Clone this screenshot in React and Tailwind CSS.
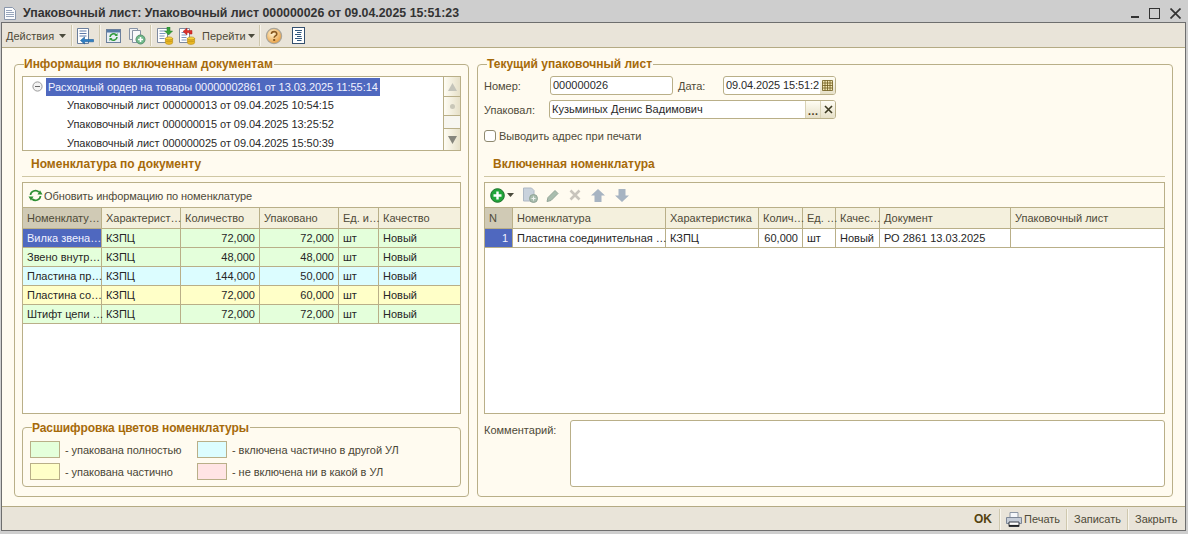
import React from "react";

const Sep = () => <div className="w-[2px] h-[21px] border-l border-[#cfc8ae] bg-[#f8f5ec]" />;

const DocBase = ({ children }) => (
  <svg width="18" height="18" viewBox="0 0 18 18" className="shrink-0 block">{children}</svg>
);

const IconBack = () => (
  <DocBase>
    <path d="M1.5 1.5h11v15h-11z" fill="#fff" stroke="#6b7f9c" />
    <path d="M3.5 4h7M3.5 6.5h7M3.5 9h7" stroke="#5e7aa8" />
    <path d="M17.5 12.5H8.5V10L4.5 13.5l4 3.5v-2.2h9z" fill="#2f7fc4" stroke="#1d5c98" strokeWidth=".6" />
  </DocBase>
);
const IconRefreshWin = () => (
  <DocBase>
    <rect x="1.5" y="2.5" width="14" height="13" fill="#e8eef4" stroke="#6b7f9c" />
    <rect x="2" y="3" width="13" height="2.5" fill="#557aa5" />
    <path d="M5 10a3.5 3.5 0 0 1 6-2.2M12 10a3.5 3.5 0 0 1-6 2.2" fill="none" stroke="#2f9a3a" strokeWidth="1.6" />
    <path d="M12.5 6v3h-3zM4.5 14v-3h3z" fill="#2f9a3a" />
  </DocBase>
);
const IconCopyAdd = () => (
  <DocBase>
    <path d="M1.5 1.5h8v11h-8z" fill="#f0f2f5" stroke="#8793a5" />
    <path d="M4.5 3.5h8v12h-8z" fill="#f8f9fb" stroke="#8793a5" />
    <circle cx="12.5" cy="12.5" r="4.5" fill="#6fb98a" stroke="#5a8f6e" />
    <path d="M10 12.5h5M12.5 10v5" stroke="#fff" strokeWidth="1.6" />
  </DocBase>
);
const Coins = () => (
  <g>
    <ellipse cx="13" cy="11.5" rx="3.6" ry="1.6" fill="#f6d33c" stroke="#b58a12" strokeWidth=".6" />
    <path d="M9.4 11.5v4.2c0 .9 1.6 1.7 3.6 1.7s3.6-.8 3.6-1.7v-4.2c0 .9-1.6 1.6-3.6 1.6s-3.6-.7-3.6-1.6z" fill="#ebb927" stroke="#b58a12" strokeWidth=".6" />
    <path d="M9.6 14c.6.9 5.6 1 6.8 0" stroke="#b58a12" strokeWidth=".6" fill="none" />
  </g>
);
const IconDocDown = () => (
  <DocBase>
    <path d="M1.5 1.5h10v14h-10z" fill="#fff" stroke="#7f8ba0" />
    <path d="M3.5 4h6M3.5 6.5h6M3.5 9h5M3.5 11.5h5" stroke="#7b95bd" />
    <path d="M11 0v4H8.6l4 4 4-4H14V0z" fill="#36a13b" stroke="#257a2b" strokeWidth=".5" />
    <Coins />
  </DocBase>
);
const IconDocBack = () => (
  <DocBase>
    <path d="M1.5 1.5h10v14h-10z" fill="#fff" stroke="#7f8ba0" />
    <path d="M3.5 5.5h4M3.5 8h5M3.5 10.5h5M3.5 13h5" stroke="#7b95bd" />
    <path d="M14 7V3.5H9V1L5 4.5 9 8V5.7h2.6V7z" fill="#dc2f2a" stroke="#a81e1a" strokeWidth=".5" />
    <Coins />
  </DocBase>
);
const IconHelp = () => (
  <svg width="18" height="18" viewBox="0 0 18 18" className="shrink-0 block">
    <defs>
      <radialGradient id="hg" cx=".4" cy=".35" r=".7">
        <stop offset="0" stopColor="#fff2cf" />
        <stop offset="1" stopColor="#e79a3a" />
      </radialGradient>
    </defs>
    <circle cx="9" cy="9" r="7.6" fill="url(#hg)" stroke="#a9a59a" strokeWidth="1.2" />
    <path d="M6.4 7c0-3.2 5.4-3.1 5.4-.1 0 2-2.6 2-2.6 3.8" fill="none" stroke="#8a5a22" strokeWidth="1.6" />
    <rect x="8.2" y="12" width="2" height="2" fill="#8a5a22" />
  </svg>
);
const IconList = () => (
  <svg width="13" height="17" viewBox="0 0 13 17" className="shrink-0 block">
    <rect x=".5" y=".5" width="12" height="16" fill="#fff" stroke="#34506f" />
    <path d="M3 3.5h7M5 5.5h4.5M3 7.5h6M5 9.5h4.5M3 11.5h7M5 13.5h4.5" stroke="#33597f" />
  </svg>
);
const Caret = () => (
  <svg width="7" height="4" viewBox="0 0 7 4" className="shrink-0 block"><path d="M0 0h7L3.5 4z" fill="#4a4a3c" /></svg>
);

const Legend = ({ children, className }) => (
  <div className={"w-fit bg-[#fffbf0] font-bold text-[12px] leading-[14px] text-[#a66a0a] pr-[1px] " + className}>{children}</div>
);

const Line = ({ title, className }) => (
  <div className={"shrink-0 h-[19px] font-bold text-[#a66a0a] text-[12px] leading-[14px] " + className}>{title}</div>
);

const leftHeaders = [
  ["Номенклату…", "bg-[#d0cab5]"],
  ["Характерист…", ""],
  ["Количество", ""],
  ["Упаковано", ""],
  ["Ед. и…", ""],
  ["Качество", "border-r-0"],
];

const rows = [
  ["Вилка звена…", "72,000", "72,000", "bg-[#e4ffdb]", true],
  ["Звено внутр…", "48,000", "48,000", "bg-[#e4ffdb]", false],
  ["Пластина пр…", "144,000", "50,000", "bg-[#dcfdff]", false],
  ["Пластина со…", "72,000", "60,000", "bg-[#ffffc8]", false],
  ["Штифт цепи …", "72,000", "72,000", "bg-[#e4ffdb]", false],
];

const cellBase = "border-r border-b border-[#b9af88] pl-[4px] pr-[4px] whitespace-nowrap leading-[18px]";

const GridRefresh = () => (
  <svg width="15" height="13" viewBox="0 0 15 13" className="shrink-0 block">
    <path d="M2.5 6a5 4.6 0 0 1 8.4-3" fill="none" stroke="#2f8f34" strokeWidth="1.7" />
    <path d="M12.5 7a5 4.6 0 0 1-8.4 3" fill="none" stroke="#2f8f34" strokeWidth="1.7" />
    <path d="M14.5 5.5h-5L12 1.2zM.5 7.5h5L3 11.8z" fill="#2f8f34" />
  </svg>
);

const AddIcon = () => (
  <svg width="15" height="15" viewBox="0 0 15 15" className="shrink-0 block">
    <circle cx="7.5" cy="7.5" r="6.8" fill="#22a63a" stroke="#1a6f2a" />
    <path d="M3.5 7.5h8M7.5 3.5v8" stroke="#fff" strokeWidth="2.4" />
  </svg>
);

const Printer = () => (
  <svg width="16" height="15" viewBox="0 0 16 15" className="shrink-0 block">
    <path d="M4 .5h8v5H4z" fill="#f5f7fa" stroke="#8d97a5" />
    <path d="M.5 5.5h15v6h-15z" fill="#c6cdd8" stroke="#7d8796" />
    <path d="M3 10h10v4.5H3z" fill="#fff" stroke="#3a3f48" />
    <path d="M3 13.6h10" stroke="#222" strokeWidth="1.4" />
  </svg>
);

export default function App() {
  return (
    <div className="w-[1188px] h-[534px] overflow-hidden bg-[#cecece] flex flex-col text-[11px] leading-[14px] text-[#3b3b2c] font-['Liberation_Sans',Arial,sans-serif]">
      {/* title bar */}
      <div className="h-[22px] shrink-0 flex items-center pt-[4px] pl-[4px] pr-[7px]">
        <svg width="12" height="13" viewBox="0 0 12 13" className="shrink-0 block">
          <path d="M.5.5h8l3 3v9H.5z" fill="#fbfcfe" stroke="#8a97ac" />
          <path d="M2 3.5h6M2 5.5h8M2 7.5h8M2 9.5h8" stroke="#98a6bc" />
        </svg>
        <div className="ml-[7px] font-bold text-[12.35px] text-[#333333] whitespace-nowrap">Упаковочный лист: Упаковочный лист 000000026 от 09.04.2025 15:51:23</div>
        <div className="ml-auto flex items-center">
          <div className="w-[8px] h-[2px] bg-[#333333] mt-[8px]" />
          <div className="ml-[10px] w-[11px] h-[11px] border-[1.5px] border-[#333333]" />
          <svg width="11" height="11" viewBox="0 0 11 11" className="ml-[10px] block"><path d="M.5.5l10 10M10.5.5l-10 10" stroke="#333333" strokeWidth="1.7" /></svg>
        </div>
      </div>

      {/* window */}
      <div className="ml-[1px] mr-[2px] h-[509px] shrink-0 border border-[#6e6e6e] flex flex-col bg-[#e9e4d9]">
        {/* toolbar */}
        <div className="h-[25px] shrink-0 border-b border-[#b4aa84] flex items-center pl-[4px] pt-[1px] text-[#4e4a38]">
          <span className="w-[49px] whitespace-nowrap">Действия</span>
          <span className="ml-[4px]"><Caret /></span>
          <span className="ml-[5px]"><Sep /></span>
          <span className="ml-[3px]"><IconBack /></span>
          <span className="ml-[5px]"><Sep /></span>
          <span className="ml-[4px]"><IconRefreshWin /></span>
          <span className="ml-[5px]"><IconCopyAdd /></span>
          <span className="ml-[4px]"><Sep /></span>
          <span className="ml-[4px]"><IconDocDown /></span>
          <span className="ml-[4px]"><IconDocBack /></span>
          <span className="ml-[6px] w-[43px] whitespace-nowrap">Перейти</span>
          <span className="ml-[3px]"><Caret /></span>
          <span className="ml-[4px]"><Sep /></span>
          <span className="ml-[4px]"><IconHelp /></span>
          <span className="ml-[9px]"><IconList /></span>
        </div>

        {/* content */}
        <div className="h-[458px] shrink-0 bg-[#fffbf0] pl-[12px] pt-[16px] pr-[12px] flex gap-[8px]">
          {/* left group */}
          <div className="w-[455px] h-[433px] shrink-0 border border-[#b9af88] rounded-[4px] px-[7px] flex flex-col">
            <Legend className="-mt-[8px] ml-[2px]">Информация по включеннам документам</Legend>
            {/* tree */}
            <div className="mt-[5px] h-[75px] shrink-0 border border-[#b9af88] bg-white flex">
              <div className="flex-1 flex flex-col text-[#2a2a2a] min-w-0 overflow-hidden tracking-[-0.05px]">
                <div className="h-[19px] shrink-0 flex items-center">
                  <svg width="11" height="11" viewBox="0 0 11 11" className="ml-[9px] block"><circle cx="5.5" cy="5.5" r="4.6" fill="#f3f3f3" stroke="#9a9a9a" /><path d="M3 5.5h5" stroke="#666" /></svg>
                  <div className="ml-[3px] h-[18px] w-[334px] bg-[#4f68bf] text-[#f2f2ff] leading-[18px] pl-[2px] whitespace-nowrap">Расходный ордер на товары 00000002861 от 13.03.2025 11:55:14</div>
                </div>
                <div className="h-[19px] shrink-0 pl-[44px] leading-[19px] whitespace-nowrap">Упаковочный лист 000000013 от 09.04.2025 10:54:15</div>
                <div className="h-[19px] shrink-0 pl-[44px] leading-[19px] whitespace-nowrap">Упаковочный лист 000000015 от 09.04.2025 13:25:52</div>
                <div className="h-[16px] shrink-0 pl-[44px] leading-[19px] whitespace-nowrap">Упаковочный лист 000000025 от 09.04.2025 15:50:39</div>
              </div>
              <div className="w-[17px] shrink-0 border-l border-[#b9af88] flex flex-col">
                <div className="h-[20px] border-b border-[#b9af88] bg-gradient-to-r from-[#fffdf4] to-[#e6e0c8] flex items-center justify-center">
                  <svg width="9" height="8" viewBox="0 0 9 8" className="block"><path d="M4.5 0L9 8H0z" fill="#c4c4ba" /></svg>
                </div>
                <div className="h-[19px] border-b border-[#b9af88] bg-gradient-to-r from-[#fffdf4] to-[#e6e0c8] flex items-center justify-center">
                  <div className="w-[5px] h-[5px] rounded-full bg-[#c9c7b8]" />
                </div>
                <div className="h-[13px] bg-[#f7f6f0] border-b border-[#b9af88]" />
                <div className="flex-1 bg-gradient-to-r from-[#fffdf4] to-[#e6e0c8] flex items-center justify-center">
                  <svg width="9" height="8" viewBox="0 0 9 8" className="block"><path d="M0 0h9L4.5 8z" fill="#85857c" /></svg>
                </div>
              </div>
            </div>
            <Line title="Номенклатура по документу" className="mt-[6px] ml-[9px]" />
            <div className="h-px bg-[#cfc7a4] mb-[5px] shrink-0" />
            {/* table */}
            <div className="h-[232px] shrink-0 border border-[#b9af88] bg-white flex flex-col">
              <div className="h-[25px] shrink-0 bg-[#fffbf0] border-b border-[#b9af88] flex items-center pl-[5px] pt-[1px] gap-[1px] text-[#4e4a38]">
                <GridRefresh />
                <span className="tracking-[-0.08px]">Обновить информацию по номенклатуре</span>
              </div>
              <div className="h-[21px] shrink-0 grid grid-cols-[79px_79px_79px_79px_40px_1fr] bg-[#f4f0dd] text-[#4e4a38]">
                {leftHeaders.map(([t, c]) => (
                  <div key={t} className={"border-r border-b border-[#b9af88] pl-[4px] whitespace-nowrap leading-[20px] " + c}>{t}</div>
                ))}
              </div>
              {rows.map(([a, q, u, bg, sel]) => (
                <div key={a} className={"h-[19px] shrink-0 grid grid-cols-[79px_79px_79px_79px_40px_1fr] text-[#262626] " + bg}>
                  <div className={cellBase + (sel ? " bg-[#4f68bf] text-[#f2f2ff]" : "")}>{a}</div>
                  <div className={cellBase}>КЗПЦ</div>
                  <div className={cellBase + " text-right"}>{q}</div>
                  <div className={cellBase + " text-right"}>{u}</div>
                  <div className={cellBase}>шт</div>
                  <div className={cellBase + " border-r-0"}>Новый</div>
                </div>
              ))}
            </div>
            {/* color legend */}
            <div className="mt-[13px] h-[60px] shrink-0 border border-[#b9af88] rounded-[4px] px-[7px] flex flex-col">
              <Legend className="-mt-[7px] ml-[2px] tracking-[-0.1px]">Расшифровка цветов номенклатуры</Legend>
              <div className="mt-[6px] grid grid-cols-[167px_1fr] gap-y-[5px] text-[#4a4636]">
                {[
                  ["bg-[#e4ffdb]", "- упакована полностью"],
                  ["bg-[#dcfdff]", "- включена частично в другой УЛ"],
                  ["bg-[#ffffc8]", "- упакована частично"],
                  ["bg-[#ffe4e4]", "- не включена ни в какой в УЛ"],
                ].map(([c, t]) => (
                  <div key={t} className="flex items-center">
                    <div className={"w-[30px] h-[17px] border border-[#b9af88] " + c} />
                    <span className="ml-[5px] tracking-[-0.05px]">{t}</span>
                  </div>
                ))}
              </div>
            </div>
          </div>

          {/* right group */}
          <div className="w-[696px] h-[433px] shrink-0 border border-[#b9af88] rounded-[4px] pl-[6px] pr-[7px] flex flex-col">
            <Legend className="-mt-[8px] ml-[3px]">Текущий упаковочный лист</Legend>
            <div className="mt-[5px] flex items-center h-[19px] shrink-0">
              <span className="w-[66px] text-[#4e4a38]">Номер:</span>
              <div className="w-[123px] h-[19px] border border-[#b9af88] rounded-[3px] bg-white pl-[2px] leading-[17px] text-[#2a2a2a]">000000026</div>
              <span className="ml-[5px] w-[45px] text-[#4e4a38]">Дата:</span>
              <div className="w-[113px] h-[19px] border border-[#b9af88] rounded-[3px] bg-white flex">
                <span className="flex-1 pl-[2px] leading-[17px] text-[#2a2a2a] whitespace-nowrap tracking-[-0.1px]">09.04.2025 15:51:2</span>
                <div className="w-[15px] shrink-0 rounded-r-[2px] bg-gradient-to-b from-[#fffdf4] to-[#e6e0c8] flex items-center justify-center">
                  <svg width="11" height="11" viewBox="0 0 11 11" className="block"><path d="M.5.5h10v10H.5zM.5 3h10M.5 5.5h10M.5 8h10M3 .5v10M5.5.5v10M8 .5v10" fill="#f3e6b3" stroke="#6d5a1c" strokeWidth=".8" /></svg>
                </div>
              </div>
            </div>
            <div className="mt-[5px] flex items-center h-[19px] shrink-0">
              <span className="w-[65px] text-[#4e4a38]">Упаковал:</span>
              <div className="w-[287px] h-[19px] border border-[#b9af88] rounded-[3px] bg-white flex overflow-hidden">
                <span className="flex-1 pl-[2px] leading-[17px] text-[#2a2a2a]">Кузьминых Денис Вадимович</span>
                <div className="w-[15px] shrink-0 bg-gradient-to-b from-[#fffdf4] to-[#e6e0c8] border-l border-[#d9d2b5] text-center font-bold leading-[20px] text-[#4a4020]">…</div>
                <div className="w-[15px] shrink-0 bg-gradient-to-b from-[#fffdf4] to-[#e6e0c8] border-l border-[#d9d2b5] flex items-center justify-center">
                  <svg width="9" height="9" viewBox="0 0 9 9" className="block"><path d="M1 1l7 7M8 1L1 8" stroke="#3d3a22" strokeWidth="1.6" /></svg>
                </div>
              </div>
            </div>
            <div className="mt-[11px] flex items-center h-[12px] shrink-0">
              <div className="w-[12px] h-[12px] border border-[#8f8a70] rounded-[3px] bg-white" />
              <span className="ml-[3px] -mt-[1px] text-[#4e4a38]">Выводить адрес при печати</span>
            </div>
            <Line title="Включенная номенклатура" className="mt-[15px] ml-[9px]" />
            <div className="h-px bg-[#cfc7a4] mb-[5px] shrink-0" />
            {/* right table */}
            <div className="h-[232px] shrink-0 border border-[#b9af88] bg-white flex flex-col">
              <div className="h-[25px] shrink-0 bg-[#fffbf0] border-b border-[#b9af88] flex items-center pl-[5px]">
                <AddIcon />
                <span className="ml-[2px]"><Caret /></span>
                <svg width="16" height="16" viewBox="0 0 16 16" className="ml-[8px] block">
                  <path d="M1.5 1h8l2.5 2.5V14H1.5z" fill="#c9d2dc" stroke="#aeb8c4" />
                  <circle cx="11.5" cy="11.5" r="4" fill="#a9bdae" stroke="#8fa394" />
                  <path d="M9.5 11.5h4M11.5 9.5v4" stroke="#eef2ef" />
                </svg>
                <svg width="14" height="14" viewBox="0 0 14 14" className="ml-[8px] block">
                  <path d="M2 9.5L9 2.5l3 3-7 7-4 1z" fill="#a9bdae" stroke="#94a698" />
                </svg>
                <svg width="12" height="12" viewBox="0 0 12 12" className="ml-[9px] block">
                  <path d="M1.5 1.5l9 9M10.5 1.5l-9 9" stroke="#c8c4bc" strokeWidth="2.6" />
                </svg>
                <svg width="14" height="13" viewBox="0 0 14 13" className="ml-[10px] block">
                  <path d="M7 0l7 6.5h-3.5V13h-7V6.5H0z" fill="#a7b4c2" />
                </svg>
                <svg width="14" height="13" viewBox="0 0 14 13" className="ml-[10px] block">
                  <path d="M7 13l7-6.5h-3.5V0h-7v6.5H0z" fill="#a7b4c2" />
                </svg>
              </div>
              <div className="h-[21px] shrink-0 grid grid-cols-[28px_153px_93px_44px_33px_44px_131px_1fr] bg-[#f4f0dd] text-[#4e4a38]">
                {["N", "Номенклатура", "Характеристика", "Колич…", "Ед. …", "Качес…", "Документ", "Упаковочный лист"].map((t, i) => (
                  <div key={t} className={"border-r border-b border-[#b9af88] pl-[4px] whitespace-nowrap leading-[20px] " + (i === 0 ? "bg-[#d0cab5]" : "") + (i === 7 ? " border-r-0" : "")}>{t}</div>
                ))}
              </div>
              <div className="h-[19px] shrink-0 grid grid-cols-[28px_153px_93px_44px_33px_44px_131px_1fr] text-[#262626]">
                <div className={cellBase + " bg-[#4f68bf] text-[#f2f2ff] text-right"}>1</div>
                <div className={cellBase}>Пластина соединительная …</div>
                <div className={cellBase}>КЗПЦ</div>
                <div className={cellBase + " text-right"}>60,000</div>
                <div className={cellBase}>шт</div>
                <div className={cellBase}>Новый</div>
                <div className={cellBase}>РО 2861 13.03.2025</div>
                <div className={cellBase + " border-r-0"} />
              </div>
            </div>
            {/* comment */}
            <div className="mt-[6px] flex shrink-0">
              <span className="w-[86px] pt-[3px] text-[#4e4a38]">Комментарий:</span>
              <div className="w-[595px] h-[67px] border border-[#b9af88] rounded-[3px] bg-white" />
            </div>
          </div>
        </div>

        {/* bottom bar */}
        <div className="flex-1 border-t border-[#b4aa84] flex items-center justify-end text-[#4e4a38] pr-[7px] pt-[1px]">
          <span className="font-bold text-[12px] text-[#54420f]">OK</span>
          <span className="ml-[7px]"><Sep /></span>
          <span className="ml-[5px]"><Printer /></span>
          <span className="ml-[2px] w-[35px]">Печать</span>
          <span className="ml-[7px]"><Sep /></span>
          <span className="ml-[6px] w-[47px] whitespace-nowrap">Записать</span>
          <span className="ml-[6px]"><Sep /></span>
          <span className="ml-[6px] w-[43px] whitespace-nowrap">Закрыть</span>
        </div>
      </div>
    </div>
  );
}
